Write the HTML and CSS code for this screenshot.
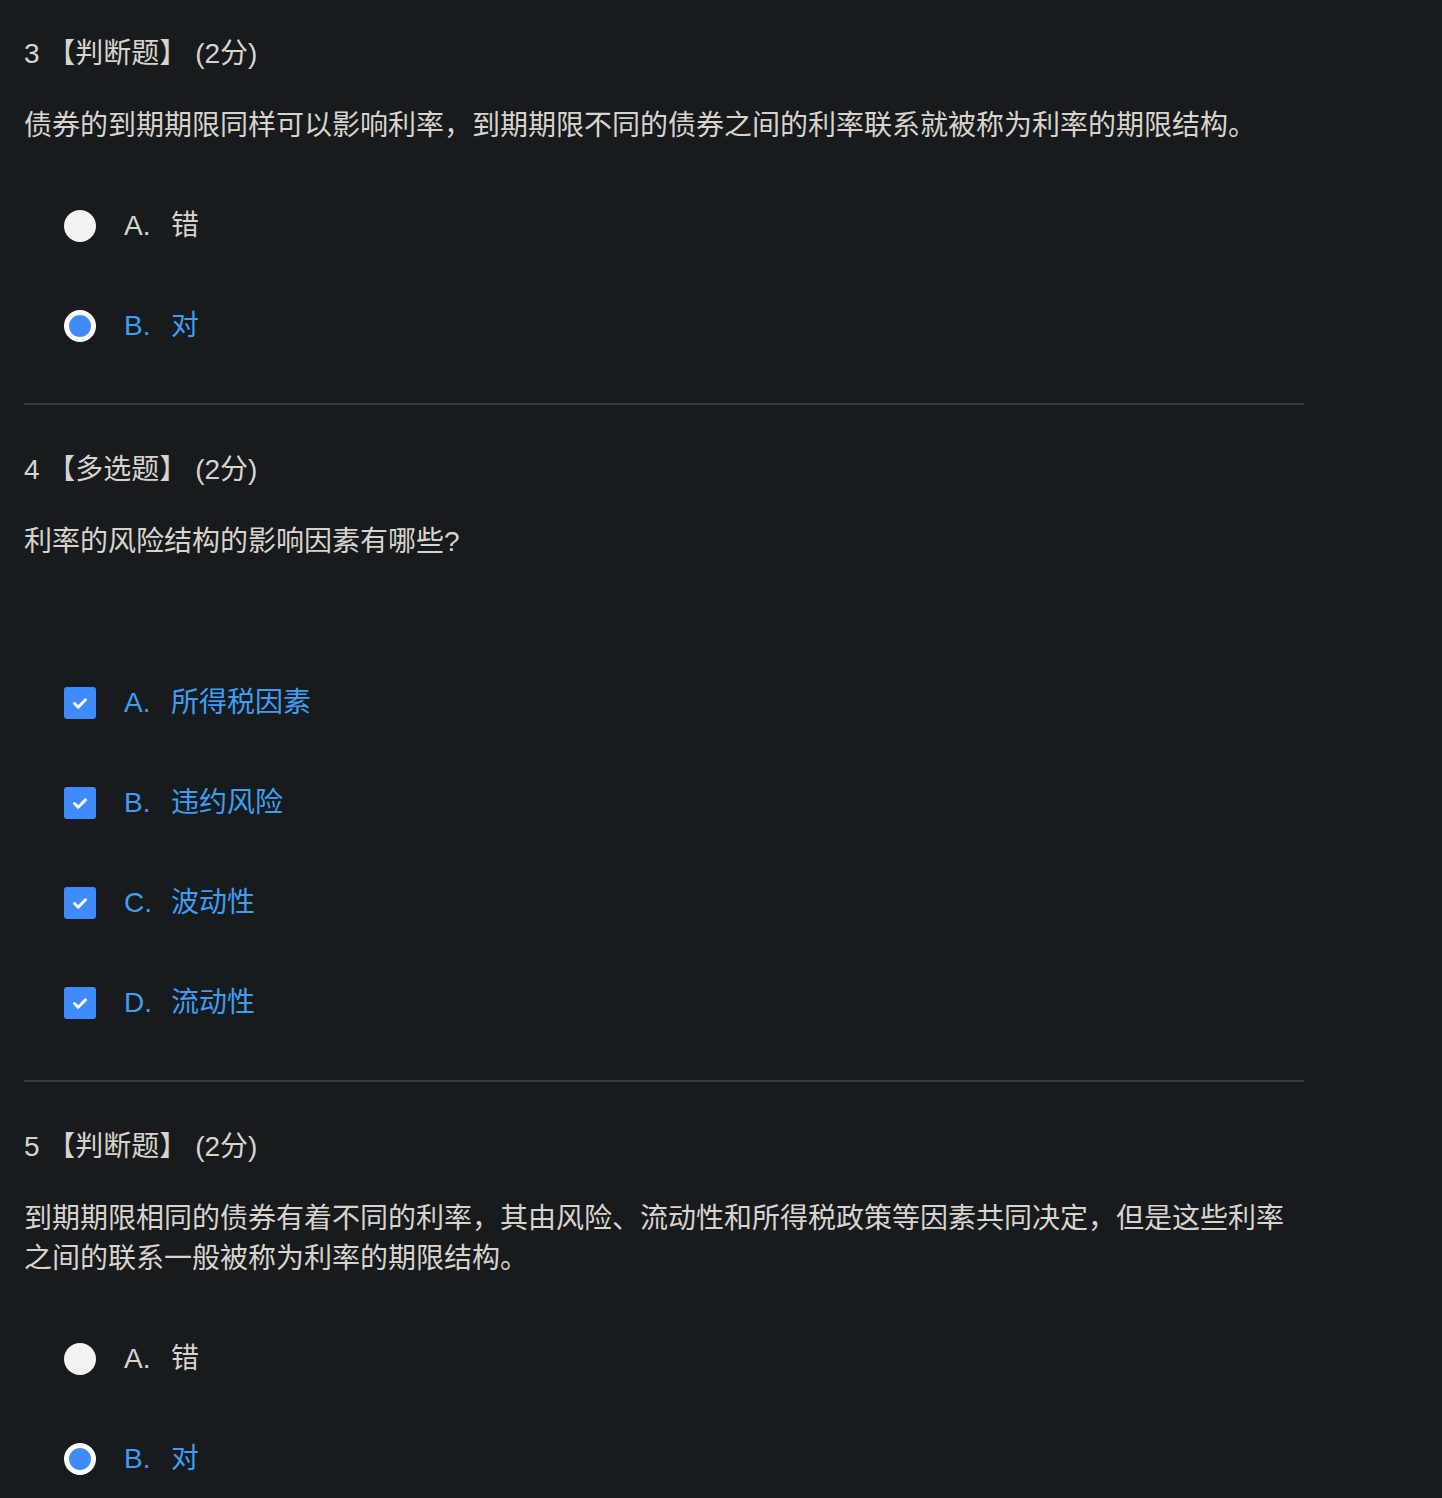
FILE: index.html
```html
<!DOCTYPE html>
<html lang="zh-CN">
<head>
<meta charset="utf-8">
<title>题目</title>
<link rel="stylesheet" href="styles.css">
</head>
<body>
<main class="quiz">
  <section class="question first">
    <div class="q-head">3 【判断题】 (2分)</div>
    <div class="q-body">债券的到期期限同样可以影响利率，到期期限不同的债券之间的利率联系就被称为利率的期限结构。</div>
    <ul class="options">
      <li class="option"><span class="radio"></span><span class="opt-letter">A.</span><span class="opt-text">错</span></li>
      <li class="option selected"><span class="radio"></span><span class="opt-letter">B.</span><span class="opt-text">对</span></li>
    </ul>
  </section>
  <hr class="divider">
  <section class="question">
    <div class="q-head">4 【多选题】 (2分)</div>
    <div class="q-body">利率的风险结构的影响因素有哪些?</div>
    <div class="q-media"></div>
    <ul class="options">
      <li class="option selected"><span class="checkbox"><svg viewBox="0 0 32 32" width="32" height="32"><polyline points="10.5,16.5 14.2,20.2 21.5,12.8" fill="none" stroke="#ffffff" stroke-width="3" stroke-linecap="round" stroke-linejoin="round"/></svg></span><span class="opt-letter">A.</span><span class="opt-text">所得税因素</span></li>
      <li class="option selected"><span class="checkbox"><svg viewBox="0 0 32 32" width="32" height="32"><polyline points="10.5,16.5 14.2,20.2 21.5,12.8" fill="none" stroke="#ffffff" stroke-width="3" stroke-linecap="round" stroke-linejoin="round"/></svg></span><span class="opt-letter">B.</span><span class="opt-text">违约风险</span></li>
      <li class="option selected"><span class="checkbox"><svg viewBox="0 0 32 32" width="32" height="32"><polyline points="10.5,16.5 14.2,20.2 21.5,12.8" fill="none" stroke="#ffffff" stroke-width="3" stroke-linecap="round" stroke-linejoin="round"/></svg></span><span class="opt-letter">C.</span><span class="opt-text">波动性</span></li>
      <li class="option selected"><span class="checkbox"><svg viewBox="0 0 32 32" width="32" height="32"><polyline points="10.5,16.5 14.2,20.2 21.5,12.8" fill="none" stroke="#ffffff" stroke-width="3" stroke-linecap="round" stroke-linejoin="round"/></svg></span><span class="opt-letter">D.</span><span class="opt-text">流动性</span></li>
    </ul>
  </section>
  <hr class="divider">
  <section class="question">
    <div class="q-head">5 【判断题】 (2分)</div>
    <div class="q-body">到期期限相同的债券有着不同的利率，其由风险、流动性和所得税政策等因素共同决定，但是这些利率之间的联系一般被称为利率的期限结构。</div>
    <ul class="options">
      <li class="option"><span class="radio"></span><span class="opt-letter">A.</span><span class="opt-text">错</span></li>
      <li class="option selected"><span class="radio"></span><span class="opt-letter">B.</span><span class="opt-text">对</span></li>
    </ul>
  </section>
</main>
</body>
</html>
```

FILE: styles.css
```css
html, body {
  margin: 0;
  padding: 0;
  background: #181b1d;
}

body {
  color: #d8d4cd;
  font-family: "Liberation Sans", "Noto Sans CJK SC", sans-serif;
  font-size: 28px;
  line-height: 40px;
}

.quiz {
  width: 1280px;
  margin-left: 24px;
}

.question {
  padding: 45px 0 27px;
}

.question.first {
  padding-top: 34px;
}

.q-head {
  white-space: pre;
  height: 40px;
}

.q-body {
  margin-top: 32px;
}

.q-media {
  height: 61px;
}

.options {
  list-style: none;
  margin: 30px 0 0;
  padding: 0;
}

.option {
  height: 100px;
  display: flex;
  align-items: center;
  padding-left: 40px;
}

.radio {
  width: 32px;
  height: 32px;
  border-radius: 50%;
  background: #f3f3f3;
  box-sizing: border-box;
  flex: none;
}

.option.selected .radio {
  background: #3f8bfb;
  border: 5px solid #ffffff;
}

.checkbox {
  width: 32px;
  height: 32px;
  border-radius: 3px;
  background: #3f8bfb;
  flex: none;
  display: block;
}

.checkbox svg {
  display: block;
}

.opt-letter {
  margin-left: 28px;
  width: 47px;
  flex: none;
}

.option.selected .opt-letter,
.option.selected .opt-text {
  color: #3d9ef2;
}

.divider {
  margin: 0;
  border: 0;
  height: 2px;
  background: #393c3e;
}
```
